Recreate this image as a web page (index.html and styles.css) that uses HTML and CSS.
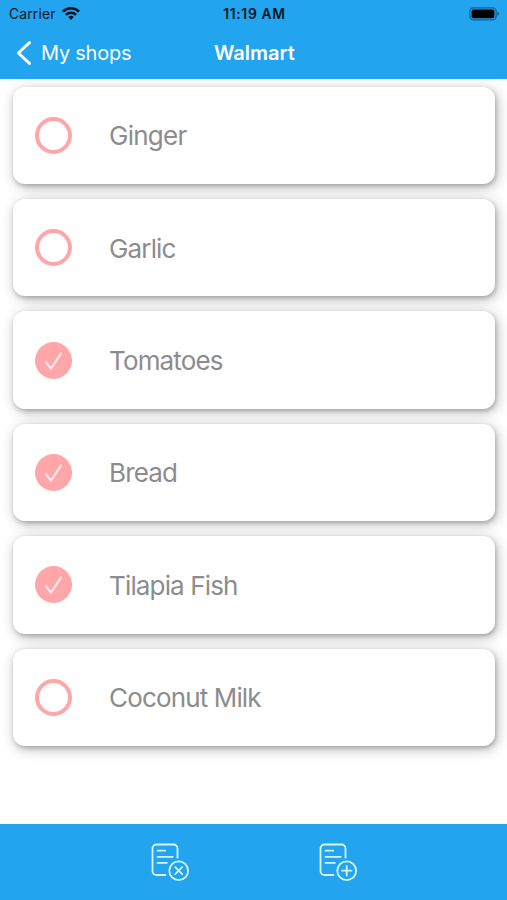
FILE: index.html
```html
<!DOCTYPE html>
<html lang="en">
<head>
<meta charset="utf-8">
<title>Walmart</title>
<link rel="stylesheet" href="styles.css">
</head>
<body>
<div class="app">
  <header class="top">
    <div class="status">
      <div class="carrier"><span>Carrier</span>
        <svg width="18" height="13" viewBox="0 0 18 13" fill="none" stroke="#04131f" stroke-width="2.5"><path d="M1 4.6a11.3 11.3 0 0 1 16 0M3.9 7.9a7.3 7.3 0 0 1 10.2 0"/><path d="M9 12.9 6.2 10.1a4 4 0 0 1 5.6 0z" fill="#04131f" stroke="none"/></svg>
      </div>
      <div class="time">11:19 AM</div>
      <svg class="battery" width="31" height="14" viewBox="0 0 31 14"><rect x=".8" y=".8" width="26.4" height="12" rx="3.6" fill="none" stroke="#14618f" stroke-width="1.2"/><rect x="2.6" y="2.5" width="22.8" height="8.7" rx="1.8" fill="#000"/><path d="M28.3 4.6c2.1.8 2.1 3.7 0 4.5z" fill="#14618f"/></svg>
    </div>
    <nav class="nav">
      <a class="back"><svg width="15" height="24" viewBox="0 0 15 24" fill="none" stroke="#fff" stroke-width="2.9" stroke-linecap="round" stroke-linejoin="round"><path d="M13.5 1.6 2.4 12l11.1 10.4"/></svg><span>My shops</span></a>
      <h1>Walmart</h1>
    </nav>
  </header>
  <main class="list">
    <div class="card"><span class="ring"></span><span class="name ginger">Ginger</span></div>
    <div class="card"><span class="ring"></span><span class="name">Garlic</span></div>
    <div class="card"><span class="ring done"><svg width="37" height="37" viewBox="0 0 37 37"><path d="m11 20.4 5 6.1 10-15"/></svg></span><span class="name">Tomatoes</span></div>
    <div class="card"><span class="ring done"><svg width="37" height="37" viewBox="0 0 37 37"><path d="m11 20.4 5 6.1 10-15"/></svg></span><span class="name">Bread</span></div>
    <div class="card"><span class="ring done"><svg width="37" height="37" viewBox="0 0 37 37"><path d="m11 20.4 5 6.1 10-15"/></svg></span><span class="name">Tilapia Fish</span></div>
    <div class="card"><span class="ring"></span><span class="name">Coconut Milk</span></div>
  </main>
  <footer class="tools">
    <svg class="tool" width="39" height="39" viewBox="0 0 39 39"><path d="M14.5 32H5.5a4 4 0 0 1-4-4V5.5a4 4 0 0 1 4-4h17a4 4 0 0 1 4 4v9.2M6.5 7.7h7.7M6.5 13.8h15.3M6.5 19.9h9.3"/><circle cx="27.7" cy="27.7" r="9.4"/><path d="m24.2 24.2 7 7m0-7-7 7"/></svg>
    <svg class="tool" width="39" height="39" viewBox="0 0 39 39"><path d="M14.5 32H5.5a4 4 0 0 1-4-4V5.5a4 4 0 0 1 4-4h17a4 4 0 0 1 4 4v9.2M6.5 7.7h7.7M6.5 13.8h15.3M6.5 19.9h9.3"/><circle cx="27.7" cy="27.7" r="9.4"/><path d="M22.9 27.7h9.6m-4.8-4.8v9.6"/></svg>
  </footer>
</div>
</body>
</html>
```
FILE: styles.css
```css
* { box-sizing: border-box; }
body { margin: 0; background: #fff; font-family: Inter, "Liberation Sans", sans-serif; }
svg { display: block; flex: none; }
.app { height: 900px; display: flex; flex-direction: column; overflow: hidden; }
.top { height: 79px; flex: none; background: #22a4ee; }
.status { height: 27px; padding: 0 7px 0 9px; display: grid; grid-template-columns: 1fr auto 1fr; align-items: center; color: #04131f; }
.carrier { display: flex; align-items: center; gap: 6px; font-size: 13.8px; letter-spacing: .2px; }
.time { font-size: 13.8px; font-weight: 600; letter-spacing: .7px; }
.battery { justify-self: end; }
.nav { height: 52px; padding-left: 16px; display: grid; grid-template-columns: 198px 1fr; align-items: center; color: #fff; }
.back { display: flex; align-items: center; gap: 10px; font-size: 20px; letter-spacing: -.25px; }
.nav h1 { margin: 0; font-size: 20px; font-weight: 600; }
.list { flex: 1; padding: 7.6px 12.5px 0 13px; display: flex; flex-direction: column; gap: 15px; }
.card { height: 97.4px; flex: none; padding-left: 22px; display: flex; align-items: center; gap: 37px; border-radius: 12px; background: #fff; box-shadow: 2px 3px 13px rgba(0, 0, 0, .28), 1px 2px 4px rgba(0, 0, 0, .2); }
.ring { width: 37px; height: 37px; flex: none; border: 4px solid #ffa6a8; border-radius: 50%; }
.done { border: 0; background: #ffa6a8; }
.done path { fill: none; stroke: #ffe2e2; stroke-width: 2.3; stroke-linecap: round; stroke-linejoin: round; }
.name { padding-top: 2px; color: #8c8c8e; font-size: 26px; line-height: 32px; letter-spacing: -.85px; white-space: nowrap; }
.ginger { letter-spacing: -.75px; }
.tools { height: 76px; flex: none; padding: 18.5px 0 0 150.5px; display: flex; gap: 129px; background: #22a4ee; }
.tool { fill: none; stroke: #d8f4ff; stroke-width: 1.8; stroke-linecap: round; stroke-linejoin: round; }
```
